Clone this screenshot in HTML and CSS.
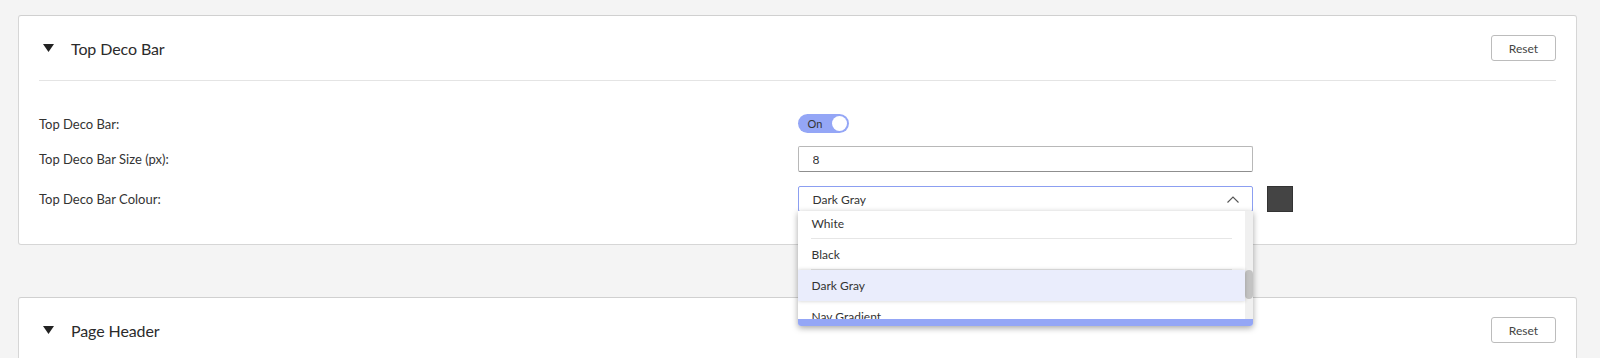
FILE: index.html
```html
<!DOCTYPE html>
<html lang="en">
<head>
    <meta charset="UTF-8">
    <meta name="viewport" content="width=device-width, initial-scale=1.0">
    <title>Theme Settings</title>
    <link rel="stylesheet" href="styles.css">
</head>
<body>
    <section class="card">
        <div class="card-head">
            <svg class="caret" width="11" height="8" viewBox="0 0 11 8"><polygon points="0,0 11,0 5.5,8" fill="#222"/></svg>
            <h2 class="card-title">Top Deco Bar</h2>
            <button class="btn-reset">Reset</button>
        </div>
        <div class="card-body">
            <div class="field field-toggle">
                <label>Top Deco Bar:</label>
                <div class="control">
                    <span class="toggle"><span class="toggle-text">On</span><i class="knob"></i></span>
                </div>
            </div>
            <div class="field field-size">
                <label>Top Deco Bar Size (px):</label>
                <div class="control">
                    <input type="text" class="text-input" value="8">
                </div>
            </div>
            <div class="field field-colour">
                <label>Top Deco Bar Colour:</label>
                <div class="control">
                    <div class="select-wrap">
                        <div class="select open">
                            <span>Dark Gray</span>
                            <svg class="chevron" width="12" height="7" viewBox="0 0 12 7"><polyline points="0.5,6.5 6,1 11.5,6.5" fill="none" stroke="#555" stroke-width="1.1"/></svg>
                        </div>
                        <div class="dropdown">
                            <div class="dropdown-list">
                                <ul>
                                    <li>White</li>
                                    <li>Black</li>
                                    <li class="active">Dark Gray</li>
                                    <li>Nav Gradient</li>
                                </ul>
                                <div class="scroll-track"><div class="scroll-thumb"></div></div>
                            </div>
                            <div class="dropdown-foot"></div>
                        </div>
                    </div>
                    <span class="swatch"></span>
                </div>
            </div>
        </div>
    </section>

    <section class="card">
        <div class="card-head">
            <svg class="caret" width="11" height="8" viewBox="0 0 11 8"><polygon points="0,0 11,0 5.5,8" fill="#222"/></svg>
            <h2 class="card-title">Page Header</h2>
            <button class="btn-reset">Reset</button>
        </div>
        <div class="card-body tall"></div>
    </section>
</body>
</html>
```

FILE: styles.css
```css
html {
    overflow: hidden;
}
body {
    font-family: Lato, "Open Sans", sans-serif;
    margin: 0;
    padding: 15px 23px 0 18px;
    background: #f4f4f4;
    color: #333;
}
.card {
    background: #fff;
    border: 1px solid #d6d6d6;
    border-top-color: #d0d0d0;
    border-radius: 3px;
    padding: 0 20px;
    margin-bottom: 52px;
}
.card-head {
    display: flex;
    align-items: center;
    padding: 19px 0;
    border-bottom: 1px solid #e4e4e4;
}
.caret {
    margin: 0 17px 0 4px;
}
.card-title {
    flex: 1;
    margin: 0;
    font-size: 16px;
    letter-spacing: -0.1px;
    font-weight: normal;
    color: #2b2b2b;
}
.btn-reset {
    width: 65px;
    height: 26px;
    background: #fff;
    border: 1px solid #bcbcbc;
    border-radius: 3px;
    font-family: inherit;
    font-size: 12px;
    color: #444;
    padding: 0;
}
.card-body {
    padding: 33px 0 32px;
}
.card-body.tall {
    height: 200px;
}
.field {
    display: grid;
    grid-template-columns: 1fr 1fr;
    align-items: center;
    font-size: 13px;
}
.field label {
    color: #333;
}
.field-size {
    margin-top: 13px;
}
.field-colour {
    margin-top: 14px;
}
.control {
    display: flex;
    align-items: center;
}
.toggle {
    display: flex;
    align-items: center;
    justify-content: space-between;
    width: 51px;
    height: 19px;
    box-sizing: border-box;
    padding: 0 2px 0 10px;
    background: #94a6f6;
    border-radius: 10px;
}
.toggle-text {
    font-size: 11px;
    color: #333;
}
.knob {
    width: 15px;
    height: 15px;
    background: #fff;
    border-radius: 50%;
}
.text-input {
    width: 60%;
    height: 26px;
    box-sizing: border-box;
    border: 1px solid #b8b8b8;
    border-bottom-color: #8f8f8f;
    border-radius: 2px;
    padding: 0 14px;
    font-family: inherit;
    font-size: 12px;
    color: #333;
}
.select-wrap {
    position: relative;
    width: 60%;
}
.select {
    display: flex;
    align-items: center;
    justify-content: space-between;
    height: 26px;
    box-sizing: border-box;
    border: 1px solid #8c9ff1;
    border-radius: 2px;
    padding: 0 13px 0 14px;
    font-size: 12px;
    color: #333;
}
.swatch {
    width: 24px;
    height: 24px;
    margin-left: 14px;
    background: #444;
    border: 1px solid #333;
}
.dropdown {
    position: absolute;
    top: 25px;
    left: 0;
    width: 100%;
    z-index: 10;
    background: #fff;
    border-radius: 0 0 3px 3px;
    box-shadow: 0 2px 6px rgba(0, 0, 0, 0.35);
    overflow: hidden;
}
.dropdown-list {
    position: relative;
    height: 108px;
    overflow: hidden;
}
.dropdown-list ul {
    list-style: none;
    margin: -3px 0 0;
    padding: 0 8px 0 0;
}
.dropdown-list li {
    position: relative;
    height: 31px;
    line-height: 31px;
    padding: 0 14px;
    font-size: 12px;
    color: #333;
}
.dropdown-list li::after {
    content: "";
    position: absolute;
    left: 13px;
    right: 13px;
    bottom: 0;
    border-bottom: 1px solid #e6e6e6;
}
.dropdown-list li.active {
    background: #eaedfc;
    box-shadow: 0 0 4px rgba(0, 0, 0, 0.2);
    z-index: 1;
}
.dropdown-list li.active::after {
    display: none;
}
.scroll-track {
    position: absolute;
    top: 0;
    right: 0;
    width: 8px;
    height: 100%;
    background: #f0f0f0;
}
.scroll-thumb {
    margin-top: 59px;
    height: 29px;
    background: #c3c3c3;
    border-radius: 4px;
}
.dropdown-foot {
    height: 7px;
    background: #94a6f6;
}
```
